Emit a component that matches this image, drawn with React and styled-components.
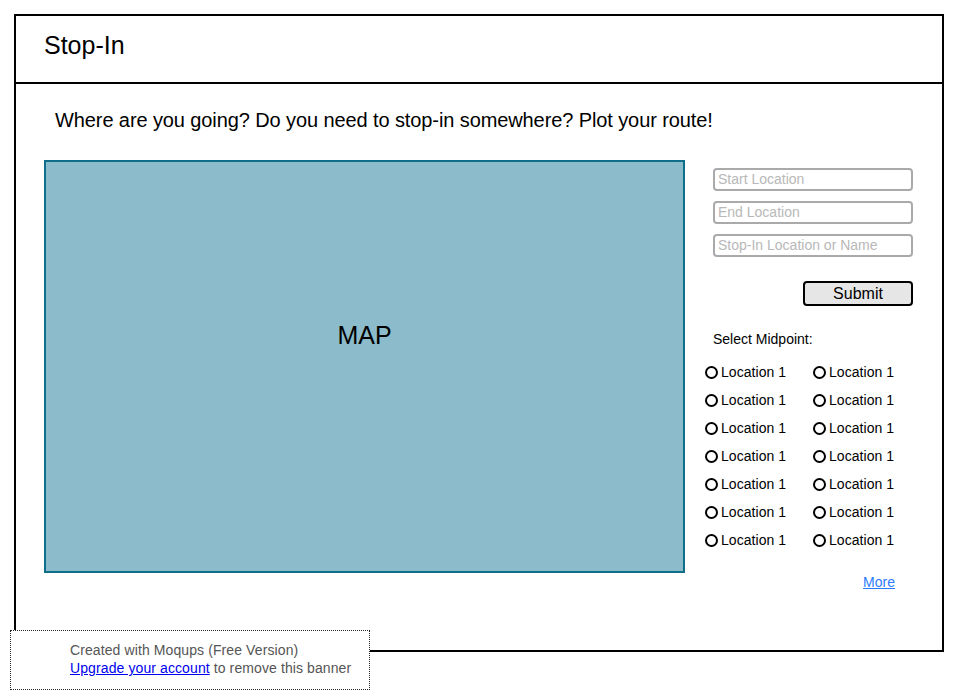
import React from "react";
import styled, { createGlobalStyle } from "styled-components";

const Global = createGlobalStyle`
  html, body { margin: 0; padding: 0; background: #fff; }
  body { font-family: "Liberation Sans", Arial, sans-serif; color: #000; }
  * { box-sizing: border-box; }
`;

const Frame = styled.div`
  margin: 14px 0 0 14px;
  width: 930px;
  height: 638px;
  border: 2px solid #000;
  display: flex;
  flex-direction: column;
`;

const Header = styled.header`
  height: 68px;
  border-bottom: 2px solid #000;
  padding: 15px 0 0 28px;
`;

const Title = styled.h1`
  margin: 0;
  font-size: 25px;
  font-weight: normal;
  line-height: normal;
`;

const Content = styled.main`
  padding: 25px 0 0 28px;
`;

const Lead = styled.h2`
  margin: 0 0 0 11px;
  font-size: 20px;
  letter-spacing: -0.1px;
  font-weight: normal;
  line-height: 23px;
`;

const Row = styled.div`
  display: flex;
  gap: 28px;
  margin-top: 28px;
`;

const Map = styled.div`
  width: 641px;
  height: 413px;
  background: #8cbccb;
  border: 2px solid #0f6f8b;
  text-align: center;
  padding-top: 159px;
  font-size: 25px;
  line-height: normal;
`;

const Side = styled.aside`
  width: 200px;
  padding-top: 8px;
  display: flex;
  flex-direction: column;
`;

const Field = styled.input`
  width: 200px;
  height: 23px;
  border: 2px solid #aaaaaa;
  border-radius: 4px;
  padding: 0 0 1px 3px;
  margin: 0 0 10px 0;
  font-family: "Liberation Sans", Arial, sans-serif;
  font-size: 14px;
  background: #fff;
  outline: none;
  &::placeholder { color: #b8b8b8; }
`;

const Submit = styled.button`
  align-self: flex-end;
  margin-top: 14px;
  width: 110px;
  height: 25px;
  border: 2px solid #000;
  border-radius: 4px;
  background: #e6e6e6;
  font-family: "Liberation Sans", Arial, sans-serif;
  font-size: 16px;
  color: #000;
  padding: 0;
`;

const Label = styled.div`
  margin-top: 24px;
  font-size: 14px;
  line-height: 18px;
`;

const Options = styled.div`
  margin: 15px 0 0 -8px;
  display: grid;
  grid-template-columns: 108px 108px;
  row-gap: 10px;
`;

const Option = styled.label`
  display: flex;
  align-items: center;
  gap: 3px;
  height: 18px;
  font-size: 14px;
  letter-spacing: 0.05px;
`;

const Dot = styled.span`
  width: 13px;
  height: 13px;
  border: 2px solid #000;
  border-radius: 50%;
  flex: none;
`;

const More = styled.a`
  align-self: flex-end;
  margin: 24px 18px 0 0;
  font-size: 14px;
  line-height: 18px;
  color: #2b7bff;
  text-decoration: underline;
`;

const Banner = styled.div`
  position: absolute;
  left: 10px;
  top: 630px;
  width: 360px;
  height: 60px;
  background: #fff;
  border: 1px dotted #222;
  padding: 10px 0 0 59px;
  font-size: 14px;
  letter-spacing: 0.1px;
  line-height: 18px;
  color: #555;
`;

const BannerLink = styled.a`
  color: #0000ee;
  text-decoration: underline;
`;

export default function App() {
  const rows = Array.from({ length: 14 });
  return (
    <>
      <Global />
      <Frame>
        <Header>
          <Title>Stop-In</Title>
        </Header>
        <Content>
          <Lead>Where are you going? Do you need to stop-in somewhere? Plot your route!</Lead>
          <Row>
            <Map>MAP</Map>
            <Side>
              <Field placeholder="Start Location" />
              <Field placeholder="End Location" />
              <Field placeholder="Stop-In Location or Name" />
              <Submit>Submit</Submit>
              <Label>Select Midpoint:</Label>
              <Options>
                {rows.map((_, i) => (
                  <Option key={i}>
                    <Dot />
                    Location 1
                  </Option>
                ))}
              </Options>
              <More href="#">More</More>
            </Side>
          </Row>
        </Content>
      </Frame>
      <Banner>
        Created with Moqups (Free Version)
        <br />
        <BannerLink href="#">Upgrade your account</BannerLink> to remove this banner
      </Banner>
    </>
  );
}
